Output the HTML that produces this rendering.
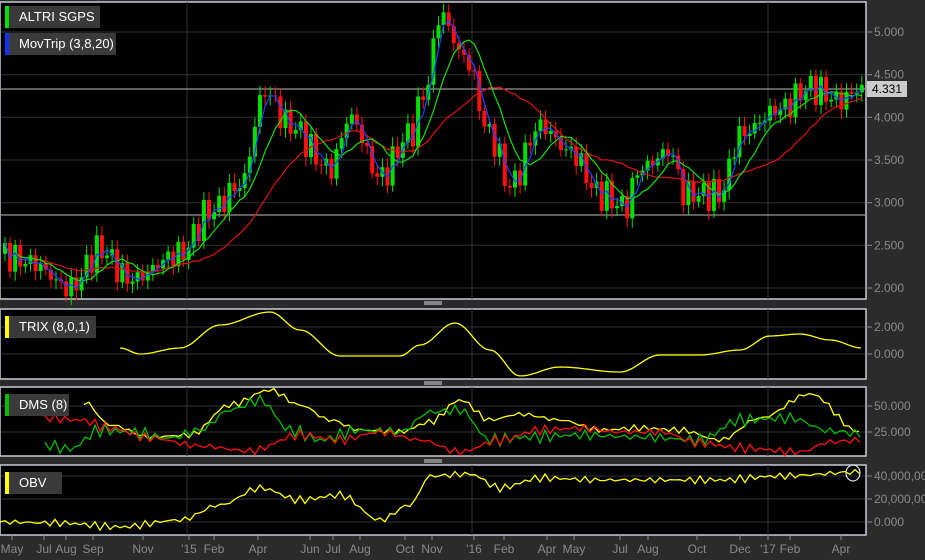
<!DOCTYPE html>
<html><head><meta charset="utf-8"><style>
body{margin:0;background:#2b2b2b;width:925px;height:560px;overflow:hidden;font-family:"Liberation Sans",sans-serif}
svg{position:absolute;left:0;top:0}
.lab{position:absolute;background:#3a3a3a;color:#fff;font-size:13px;height:22px;line-height:22px;padding-left:14px;}
.lab i{position:absolute;left:0;top:0;width:4px;height:22px}
</style></head><body>
<svg id="s" width="925" height="560" font-family="Liberation Sans" font-size="12"></svg>
<div class="lab" style="left:5px;top:6px;width:81px"><i style="background:#00e000"></i>ALTRI SGPS</div>
<div class="lab" style="left:5px;top:33px;width:97px"><i style="background:#1030ff"></i>MovTrip (3,8,20)</div>
<div class="lab" style="left:5px;top:316px;width:77px"><i style="background:#ffff00"></i>TRIX (8,0,1)</div>
<div class="lab" style="left:5px;top:394px;width:50px"><i style="background:#00c000"></i>DMS (8)</div>
<div class="lab" style="left:5px;top:472px;width:43px"><i style="background:#ffff00"></i>OBV</div>
<script>
var s=document.getElementById('s'),h='';
function interp(k,x){for(var i=0;i<k.length-1;i++){if(x<=k[i+1][0]){var t=(x-k[i][0])/(k[i+1][0]-k[i][0]);t=(1-Math.cos(t*Math.PI))/2;return k[i][1]+t*(k[i+1][1]-k[i][1]);}}return k[k.length-1][1];}
function poly(k,x0,x1,c,step,nz){var p=[];for(var x=x0;x<=x1;x+=step||3)p.push(x+','+(interp(k,x)+(nz||0)*(Math.sin(x*1.9)+0.7*Math.sin(x*0.77))).toFixed(1));return '<polyline points="'+p.join(' ')+'" fill="none" stroke="'+c+'" stroke-width="1.3"/>';}
var P=[[0,2,866,299],[0,309,866,379],[0,387,866,456],[0,465,866,535]];
P.forEach(function(p){h+='<rect x="'+p[0]+'" y="'+p[1]+'" width="'+(p[2]-p[0])+'" height="'+(p[3]-p[1])+'" fill="#000" stroke="#c8ccd8" stroke-width="1.5"/>';});
function grid(y,lab){h+='<line x1="1" x2="865" y1="'+y+'" y2="'+y+'" stroke="#333"/><line x1="866" x2="872" y1="'+y+'" y2="'+y+'" stroke="#888"/><text x="874" y="'+(y+4)+'" fill="#8a8a8a">'+lab+'</text>';}
[[32,'5.000'],[74.7,'4.500'],[117.3,'4.000'],[160,'3.500'],[202.7,'3.000'],[245.3,'2.500'],[288,'2.000']].forEach(function(g){grid(g[0],g[1]);});
grid(327,'2.000');grid(354,'0.000');grid(406,'50.000');grid(432,'25.000');grid(476,'40,000,000');grid(499,'20,000,000');grid(522,'0.000');
[187,472,768].forEach(function(x){P.forEach(function(p){h+='<line x1="'+x+'" x2="'+x+'" y1="'+p[1]+'" y2="'+p[3]+'" stroke="#333"/>';});});
h+='<line x1="1" x2="865" y1="89" y2="89" stroke="#bbb"/><line x1="1" x2="865" y1="215" y2="215" stroke="#bbb"/>';
h+='<rect x="867" y="81" width="40" height="16" fill="#ccc"/><text x="872" y="93" fill="#000" font-size="12">4.331</text>';
[303,383,461].forEach(function(y){for(var d=-1;d<=1;d+=2)h+='<line x1="424" x2="442" y1="'+(y+d)+'" y2="'+(y+d)+'" stroke="#ddd"/>';});
var pk=[[0,2.4],[30,2.3],[70,2.0],[100,2.45],[130,2.1],[180,2.4],[210,2.9],[240,3.2],[265,4.3],[290,3.9],[330,3.4],[350,4.0],[380,3.3],[410,3.8],[425,4.3],[440,5.2],[465,4.7],[490,3.8],[510,3.2],[540,3.9],[570,3.6],[600,3.1],[625,2.95],[640,3.4],[670,3.6],[685,3.1],[720,3.1],[740,3.8],[780,4.1],[810,4.35],[840,4.2],[862,4.35]];
function Y(p){return 32+(5-p)*85.33;}
var cl=[],xs=[],prev=2.4;
for(var x=5;x<=862;x+=5.1){var c=interp(pk,x)+0.12*Math.sin(x*1.7)+0.08*Math.sin(x*0.53);xs.push(x);cl.push(c);
var o=prev,hi=Math.max(o,c)+0.06+0.05*Math.abs(Math.sin(x*3.1)),lo=Math.min(o,c)-0.06-0.05*Math.abs(Math.cos(x*2.3));
var col=c>=o?'#00e000':'#ff1010';
h+='<line x1="'+x+'" x2="'+x+'" y1="'+Y(hi)+'" y2="'+Y(lo)+'" stroke="'+col+'"/>';
var t=Y(Math.max(o,c)),b=Y(Math.min(o,c));h+='<rect x="'+(x-2)+'" y="'+t+'" width="4" height="'+Math.max(1,b-t)+'" fill="'+col+'"/>';prev=c;}
function ma(n,col){var p=[];for(var i=0;i<cl.length;i++){var a=0,m=0;for(var j=Math.max(0,i-n+1);j<=i;j++){a+=cl[j];m++;}p.push(xs[i]+','+Y(a/m).toFixed(1));}h+='<polyline points="'+p.join(' ')+'" fill="none" stroke="'+col+'" stroke-width="1.2"/>';}
ma(20,'#e01010');ma(8,'#10e010');ma(3,'#2040ff');
h+=poly([[120,348],[140,354],[180,348],[220,325],[270,312],[300,330],[340,356],[400,356],[420,345],[455,323],[490,350],[520,376],[560,367],[620,372],[660,355],[700,355],[740,350],[770,336],[800,334],[830,340],[862,348]],120,862,'#ffff00');
h+=poly([[84,402],[110,425],[150,437],[190,435],[230,405],[270,390],[300,405],[330,420],[360,430],[400,432],[430,422],[460,400],[490,420],[520,414],[560,420],[600,430],[640,428],[680,430],[720,440],[760,418],[810,394],[860,432]],84,862,'#ffff00',5,2);
h+=poly([[45,445],[70,449],[100,430],[130,432],[170,438],[200,430],[230,410],[260,400],[290,430],[320,440],[360,430],[400,432],[430,412],[460,410],[490,440],[530,437],[580,435],[640,437],[700,440],[740,420],[790,418],[830,431],[862,434]],45,862,'#00c000',5,4);
h+=poly([[45,418],[80,420],[110,428],[150,438],[200,446],[250,451],[300,435],[340,440],[380,432],[420,440],[460,452],[500,440],[540,430],[580,428],[620,432],[660,432],[700,443],[740,448],[800,452],[830,442],[862,440]],45,862,'#ff1010',5,3);
h+=poly([[0,522],[60,523],[120,527],[180,520],[220,505],[260,488],[300,500],[340,495],[380,520],[410,505],[430,476],[470,474],[500,488],[540,478],[600,480],[660,480],[720,480],[780,476],[862,472]],0,862,'#ffff00',5,2.5);
h+='<ellipse cx="853" cy="473" rx="7" ry="8" fill="none" stroke="#ddd" stroke-width="1.2"/>';
[['May',12],['Jul',44],['Aug',66],['Sep',93],['Nov',143],["'15",189],['Feb',214],['Apr',258],['Jun',310],['Jul',333],['Aug',360],['Oct',405],['Nov',432],["'16",474],['Feb',504],['Apr',547],['May',574],['Jul',620],['Aug',648],['Oct',697],['Dec',740],["'17",768],['Feb',790],['Apr',841]].forEach(function(a){h+='<line x1="'+a[1]+'" x2="'+a[1]+'" y1="535" y2="540" stroke="#888"/><text x="'+a[1]+'" y="553" fill="#8a8a8a" text-anchor="middle">'+a[0]+'</text>';});
s.innerHTML=h;
</script>
</body></html>
